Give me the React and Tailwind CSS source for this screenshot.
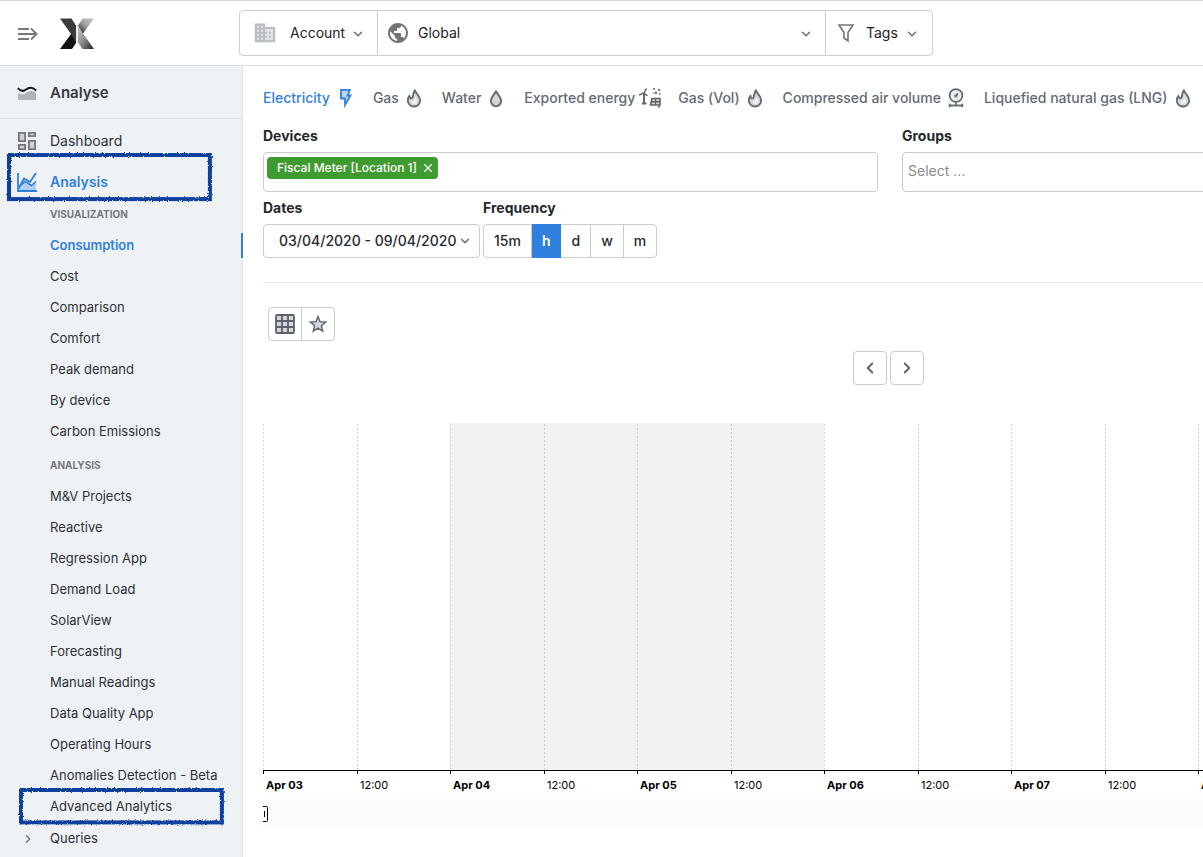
import { useState } from 'react';
import { ChevronDown, ChevronLeft, ChevronRight, X } from 'lucide-react';
import { MdPublic } from 'react-icons/md';

/* ---------- Icons ---------- */

const MenuIcon = () => (
    <svg width="22" height="14" viewBox="0 0 22 14" fill="none" stroke="#77787b" strokeWidth="1.8">
        <path d="M1 2h11M1 7h18M1 12h11" />
        <path d="M14 1.5 19.6 7 14 12.5" />
    </svg>
);

const Logo = () => (
    <svg width="34" height="32" viewBox="0 0 34 32">
        <defs>
            <linearGradient id="logoTop" x1="1" y1="0" x2="0.2" y2="1">
                <stop offset="0" stopColor="#c3c4c8" />
                <stop offset="0.5" stopColor="#a4a5aa" />
                <stop offset="1" stopColor="#333437" />
            </linearGradient>
            <linearGradient id="logoBottom" x1="0" y1="0" x2="1" y2="1">
                <stop offset="0" stopColor="#c9c9c9" />
                <stop offset="0.5" stopColor="#8b8b8c" />
                <stop offset="1" stopColor="#1f1f20" />
            </linearGradient>
        </defs>
        <path d="M0 31 11.5 15.5 16 23V25L12 31z" fill="#111214" />
        <path d="M0 .5h11.5L16 7.5V24.5L11 16z" fill="#3b3c40" />
        <path d="M34 .5H22.5L18 7.5V12L23 15.5z" fill="url(#logoTop)" />
        <path d="M18 7.5 23 15.5 34 31H22.5L18 24.5z" fill="url(#logoBottom)" />
        <path d="M17 7v18" stroke="#d9d9da" strokeWidth="1" />
    </svg>
);

const AnalyseIcon = () => (
    <svg width="20" height="14" viewBox="0 0 20 14" fill="none">
        <path d="M1 6.5C3 8.5 6 9 9 7s6-3 10 0V14H1z" fill="#b1b4b7" />
        <path d="M.8 2.2C4 5.8 6.500 5.500 9 3.500s6-3 10.200 1" stroke="#151617" strokeWidth="2" />
    </svg>
);

const DashboardIcon = () => (
    <svg width="18" height="18" viewBox="0 0 18 18" fill="#cfd1d3" stroke="#75777a" strokeWidth="1.8">
        <path d="M.9.9h6.200v8.200H.9zM10.900.9h6.200v3.200h-6.200zM10.900 8.900h6.200v8.200h-6.200zM.9 12.900h6.200v4.200H.9z" />
    </svg>
);

const AnalysisIcon = () => (
    <svg width="20" height="20" viewBox="0 0 20 20" fill="none" stroke="#2f80de" strokeWidth="1.8">
        <path d="M1 17 7 10.5 15 14 19 10v8H1z" fill="#aecdf2" stroke="none" />
        <path d="M1 1v18h19" />
        <path d="m1.5 16.5 5.5-10 6 3.500 6-9" />
        <path d="m3 14 5-4.500 6.500 4L19 9.500" strokeWidth="1.6" />
    </svg>
);

const BuildingIcon = () => (
    <svg width="22" height="20" viewBox="0 0 22 20">
        <path d="M1 1h10v18H1zM11 5h10v14H11z" fill="#e2e4e7" />
        <path
            fill="#b9bcc1"
            d="M11 4V.5H.8v18.800h20.400V4zM5 17H3v-2.200h2zm0-4H3v-2.200h2zm0-4H3V6.800h2zm0-4H3V2.800h2zm4 12H7v-2.200h2zm0-4H7v-2.200h2zm0-4H7V6.800h2zm0-4H7V2.800h2zm10 12.200h-8v-2.400h2v-2h-2v-2h2v-2h-2V6h8z"
        />
        <path fill="#b9bcc1" d="M15 8.800h2v2h-2zM15 12.800h2v2h-2z" />
    </svg>
);

const FunnelIcon = () => (
    <svg width="16" height="19" viewBox="0 0 16 19" fill="none" stroke="#737478" strokeWidth="1.6">
        <path d="M1 1h14L10 8.500V17L6 14V8.500z" />
    </svg>
);

const BoltIcon = () => (
    <svg width="20" height="20" viewBox="0 0 20 20">
        <path d="M6 1.800h8.800L12.500 7.500h3L10 17v-6.500H6z" fill="#b9d5f5" stroke="#2f80de" strokeWidth="1.8" />
    </svg>
);

const FlameIcon = () => (
    <svg width="20" height="20" viewBox="0 0 20 20">
        <path
            d="M11 2.200c.3 3.300 5.200 5.300 5.200 10.300a6 6 0 0 1-6.200 6 6 6 0 0 1-6.200-6c0-2 .6-3.500 1.600-4.700.2 1.700.8 2.600 1.900 2.600 2.600 0 .8-4.900 3.700-8.200z"
            fill="#d5d7da"
            stroke="#646a72"
            strokeWidth="1.8"
            strokeLinejoin="round"
        />
        <path d="M11.200 8.500c.3 1.800 1.800 2.300 1.800 4.300a2.800 2.800 0 0 1-5.600.4c2.500.2 3.500-1.500 3.800-4.700z" fill="#f4f4f5" />
    </svg>
);

const DropIcon = () => (
    <svg width="20" height="20" viewBox="0 0 20 20">
        <path d="M10 3.500C8 6.500 4.900 9.600 4.900 13.100a5.100 5.100 0 0 0 10.200 0C15.100 9.600 12 6.500 10 3.500z" fill="#d5d7da" stroke="#646a72" strokeWidth="1.9" />
    </svg>
);

const RenewableIcon = () => (
    <svg width="22" height="20" viewBox="0 0 22 20" className="shrink-0" fill="none" stroke="#5f656d">
        <path d="M5 6v10M3 15.500h4.500" strokeWidth="1.9" />
        <path d="M0 7l5-2 2.500-4.500M5 5l3.500 3" strokeWidth="1.5" />
        <path d="M13 10.500H21V17H11.500z" fill="#d5d7da" strokeWidth="1.6" />
        <path d="M16.500 10.500V17M12 13.700h9M20 17v3" strokeWidth="1.5" />
        <path d="M14 1h2M19 1.500l2 1M17 3.500v2.500M20 6h1.500M14.500 5h1" strokeWidth="1.7" />
    </svg>
);

const GaugeIcon = () => (
    <svg width="20" height="20" viewBox="0 0 20 20" fill="none" stroke="#646a72">
        <circle cx="10" cy="7.500" r="6.400" fill="#eceded" strokeWidth="1.7" />
        <circle cx="10" cy="7.800" r="2.200" fill="#b6b9bd" stroke="none" />
        <path d="m9 8.800 3-3.500M10 14v3.500" strokeWidth="1.4" />
        <path d="M4 17.500h12" strokeWidth="1.9" />
        <path d="M3.700 15.800v3.500M16.300 15.800v3.500" strokeWidth="1.7" />
    </svg>
);

const GridIcon = () => (
    <svg width="20" height="20" viewBox="0 0 20 20" fill="#d5d7da" stroke="#5c626b" strokeWidth="1.8">
        <rect x="1" y="1" width="18" height="18" rx="1" />
        <path d="M7 1v18M13 1v18M1 7h18M1 13h18" />
    </svg>
);

const StarIcon = () => (
    <svg width="20" height="20" viewBox="0 0 20 20" fill="#d5d7da" stroke="#646a72" strokeWidth="1.5">
        <path d="m10 2.600 2.100 5.100 5.500.4-4.200 3.600 1.300 5.400-4.700-2.900-4.700 2.900 1.300-5.400L2.400 8.100l5.500-.4z" />
    </svg>
);

/* Hand drawn frame laid over a menu entry */
const Marker = ({ className, id }) => (
    <svg className={`pointer-events-none absolute z-10 overflow-visible ${className}`} aria-hidden="true">
        <filter id={id} x="-5%" y="-20%" width="110%" height="140%">
            <feTurbulence type="fractalNoise" baseFrequency="0.8" numOctaves="2" seed="4" />
            <feDisplacementMap in="SourceGraphic" scale="3" />
        </filter>
        <rect x="2" y="2" width="98%" height="90%" fill="none" stroke="#103f9f" strokeWidth="4" filter={`url(#${id})`} />
    </svg>
);

/* ---------- Data ---------- */

const visualization = ['Consumption', 'Cost', 'Comparison', 'Comfort', 'Peak demand', 'By device', 'Carbon Emissions'];

const analysis = [
    'M&V Projects',
    'Reactive',
    'Regression App',
    'Demand Load',
    'SolarView',
    'Forecasting',
    'Manual Readings',
    'Data Quality App',
    'Operating Hours',
    'Anomalies Detection - Beta',
    'Advanced Analytics'
];

const energies = [
    { name: 'Electricity', icon: BoltIcon },
    { name: 'Gas', icon: FlameIcon },
    { name: 'Water', icon: DropIcon },
    { name: 'Exported energy', icon: RenewableIcon },
    { name: 'Gas (Vol)', icon: FlameIcon },
    { name: 'Compressed air volume', icon: GaugeIcon },
    { name: 'Liquefied natural gas (LNG)', icon: FlameIcon }
];

const frequencies = ['15m', 'h', 'd', 'w', 'm'];
const days = ['Apr 03', 'Apr 04', 'Apr 05', 'Apr 06', 'Apr 07', 'Apr 08', 'Apr 09'];
const DAY_WIDTH = 187;

/* ---------- Parts ---------- */

const MenuLink = ({ label, active, children }) => (
    <li className="relative">
        <a
            href="#"
            className={`flex h-[31px] items-center pl-[50px] text-[13px] ${active ? 'font-semibold text-[#2f80de]' : 'text-[#2d3035]'}`}
        >
            {label}
        </a>
        {active && <span className="absolute -right-px top-[3px] h-[25px] w-0.5 bg-[#2f80de]" />}
        {children}
    </li>
);

const Sidebar = () => (
    <nav className="w-[243px] shrink-0 border-r border-[#e1e4e7] bg-[#eef2f5] pb-1">
        <div className="flex h-[53px] items-center border-b border-[#e1e4e7] pl-[17px] pt-0.5 text-[15px] font-semibold text-[#383b40]">
            <span className="w-[33px]"><AnalyseIcon /></span>
            Analyse
        </div>

        <a href="#" className="mt-0.5 flex h-10 items-center pl-[18px] text-sm text-[#2d3035]">
            <span className="w-8"><DashboardIcon /></span>
            Dashboard
        </a>
        <div className="relative">
            <a href="#" className="flex h-[42px] items-center pl-[17px] text-sm font-semibold text-[#2f80de]">
                <span className="w-[33px]"><AnalysisIcon /></span>
                Analysis
            </a>
            <Marker id="roughA" className="-top-2 left-[7px] h-[49px] w-[205px]" />
        </div>

        <h2 className="flex h-[27px] items-center pb-1 pl-[50px] text-[10px] font-bold text-[#75787d]">VISUALIZATION</h2>
        <ul>
            {visualization.map((label) => (
                <MenuLink key={label} label={label} active={label === 'Consumption'} />
            ))}
        </ul>

        <h2 className="flex h-[34px] items-center pl-[50px] pt-0.5 text-[10px] font-bold text-[#75787d]">ANALYSIS</h2>
        <ul>
            {analysis.map((label) => (
                <MenuLink key={label} label={label}>
                    {label === 'Advanced Analytics' && <Marker id="roughB" className="-top-[3px] left-[19px] h-9 w-[205px]" />}
                </MenuLink>
            ))}
        </ul>

        <a href="#" className="flex h-[34px] items-center pl-[21px] text-[13px] text-[#2d3035]">
            <span className="w-[29px]"><ChevronRight className="h-3.5 w-3.5 text-[#6b6e73]" /></span>
            Queries
        </a>
    </nav>
);

const Header = () => (
    <header className="flex h-[66px] items-center border-y border-b-[#dedfe1] border-t-[#d8d8dd] bg-white">
        <div className="flex w-[239px] shrink-0 items-center gap-[21px] pl-[17px] pt-0.5">
            <button type="button" aria-label="Open menu"><MenuIcon /></button>
            <Logo />
        </div>
        <div className="flex h-[46px] w-[694px] items-stretch rounded border border-[#cdced2] text-sm text-[#1f2023]">
            <label className="relative flex w-[138px] items-center border-r border-[#cdced2] pl-[14px]">
                <BuildingIcon />
                <select aria-label="Account" className="h-full flex-1 appearance-none bg-transparent pl-3.5 outline-none">
                    <option>Account</option>
                </select>
                <ChevronDown className="pointer-events-none absolute right-[11px] h-4 w-4 pt-0.5 text-[#6b6e73]" strokeWidth={2.5} />
            </label>
            <label className="relative flex flex-1 items-center pl-2">
                <MdPublic className="h-6 w-6 text-[#737478]" />
                <select aria-label="Location" className="h-full flex-1 appearance-none bg-transparent pl-2 outline-none">
                    <option>Global</option>
                </select>
                <ChevronDown className="pointer-events-none absolute right-[11px] h-4 w-4 pt-0.5 text-[#6b6e73]" strokeWidth={2.5} />
            </label>
            <label className="relative flex w-[107px] items-center border-l border-[#cdced2] pl-3">
                <FunnelIcon />
                <select aria-label="Tags" className="h-full flex-1 appearance-none bg-transparent pl-3 outline-none">
                    <option>Tags</option>
                </select>
                <ChevronDown className="pointer-events-none absolute right-3 h-4 w-4 pt-0.5 text-[#6b6e73]" strokeWidth={2.5} />
            </label>
        </div>
    </header>
);

const Chart = () => (
    <svg className="mt-9 block h-[410px] w-full" fontSize="11" fill="#000">
        <rect x={DAY_WIDTH} y="2" width={DAY_WIDTH * 2} height="347" fill="#f2f2f2" />
        {days.map((day, i) => (
            <g key={day}>
                <path
                    d={`M${i * DAY_WIDTH + 0.5} 3V349M${i * DAY_WIDTH + 94.5} 3V349`}
                    stroke="#d3d3d3"
                    strokeDasharray="2 2"
                />
                <path d={`M${i * DAY_WIDTH + 0.5} 349v4M${i * DAY_WIDTH + 94.5} 349v4`} stroke="#000" />
                <text x={i * DAY_WIDTH + 3} y="368" fontWeight="700">{day}</text>
                <text x={i * DAY_WIDTH + 97} y="368">12:00</text>
            </g>
        ))}
        <path d="M0 349.500H1260" stroke="#000" />
        {/* Scroll strip and its handle */}
        <rect y="378" width="1260" height="30" fill="#fcfcfc" />
        <path d="M0 385.500H3.500Q4.500 385.500 4.500 386.500V399.500Q4.500 400.500 3.500 400.500H0M1.500 390v6" fill="none" stroke="#000" />
    </svg>
);

const App = () => {
    const [energy, setEnergy] = useState('Electricity');
    const [frequency, setFrequency] = useState('h');

    return (
        <div className="min-h-screen overflow-hidden bg-white font-['Inter',sans-serif] text-[#26282c]">
            <Header />
            <div className="flex">
                <Sidebar />

                <main className="min-w-0 flex-1 overflow-hidden pl-5 pt-5">
                    <div className="min-w-[1254px]">
                        {/* Energy types */}
                        <div className="flex h-6 items-center gap-[18px] text-sm font-medium">
                            {energies.map(({ name, icon: Icon }) => (
                                <button
                                    key={name}
                                    type="button"
                                    onClick={() => setEnergy(name)}
                                    className={`flex items-center gap-[5px] whitespace-nowrap ${energy === name ? 'text-[#2f80de]' : 'text-[#646a72]'}`}
                                >
                                    {name}
                                    <span className="flex w-5 justify-center"><Icon /></span>
                                </button>
                            ))}
                        </div>

                        {/* Filters */}
                        <div className="mt-4 grid grid-cols-2 gap-6">
                            <div>
                                <label htmlFor="devices" className="mb-1.5 block text-sm font-bold">Devices</label>
                                <div className="flex h-10 items-start rounded border border-[#c9cbce] p-[3px]">
                                    <span className="mt-px flex h-[22px] items-center gap-1 whitespace-nowrap rounded bg-[#3f9b2f] pl-2.5 pr-[3px] text-xs font-medium text-white">
                                        Fiscal Meter [Location 1]
                                        <button type="button" aria-label="Remove Fiscal Meter"><X className="h-3.5 w-3.5" /></button>
                                    </span>
                                    <input id="devices" type="text" className="h-full min-w-0 flex-1 px-1 outline-none" />
                                </div>
                            </div>
                            <div>
                                <label htmlFor="groups" className="mb-1.5 block text-sm font-bold">Groups</label>
                                <input
                                    id="groups"
                                    type="text"
                                    placeholder="Select ..."
                                    className="block h-10 w-full rounded border border-[#c9cbce] px-[5px] pb-1 text-sm outline-none placeholder:text-[#8a8c90]"
                                />
                            </div>
                        </div>

                        <div className="mt-1.5 flex gap-[3px]">
                            <div>
                                <label htmlFor="dates" className="mb-1.5 block text-sm font-bold">Dates</label>
                                <button
                                    id="dates"
                                    type="button"
                                    className="flex h-[34px] w-[217px] items-center justify-between whitespace-nowrap rounded border border-[#c9cbce] pl-[15px] pr-[7px] text-sm font-medium"
                                >
                                    03/04/2020 - 09/04/2020
                                    <ChevronDown className="h-3.5 w-3.5 shrink-0 text-[#646a72]" strokeWidth={2.5} />
                                </button>
                            </div>
                            <div>
                                <h3 className="mb-1.5 text-sm font-bold">Frequency</h3>
                                <div className="flex h-[34px] rounded border border-[#c9cbce] text-sm">
                                    {frequencies.map((f) => (
                                        <button
                                            key={f}
                                            type="button"
                                            onClick={() => setFrequency(f)}
                                            className={`border-r px-2.5 last:border-r-0 ${frequency === f ? '-my-px border-[#2f80de] bg-[#2f80de] font-semibold text-white' : 'border-[#c9cbce] font-medium'}`}
                                        >
                                            {f}
                                        </button>
                                    ))}
                                </div>
                            </div>
                        </div>

                        <hr className="mt-6 border-[#e6e6e8]" />

                        {/* Toolbar */}
                        <div className="ml-[5px] mt-6 flex h-[34px] w-[67px] rounded border border-[#c9cbce]">
                            <button type="button" aria-label="Show table" className="flex flex-1 items-center justify-center border-r border-[#c9cbce]">
                                <GridIcon />
                            </button>
                            <button type="button" aria-label="Add to favourites" className="flex flex-1 items-center justify-center">
                                <StarIcon />
                            </button>
                        </div>
                        <div className="mt-2.5 flex justify-center gap-[3px] pr-1">
                            <button type="button" aria-label="Previous" className="flex h-[34px] w-[34px] items-center justify-center rounded border border-[#c9cbce]">
                                <ChevronLeft className="h-[18px] w-[18px] text-[#5c626b]" strokeWidth={2.5} />
                            </button>
                            <button type="button" aria-label="Next" className="flex h-[34px] w-[34px] items-center justify-center rounded border border-[#c9cbce]">
                                <ChevronRight className="h-[18px] w-[18px] text-[#5c626b]" strokeWidth={2.5} />
                            </button>
                        </div>

                        <Chart />
                    </div>
                </main>
            </div>
        </div>
    );
};

export default App;
